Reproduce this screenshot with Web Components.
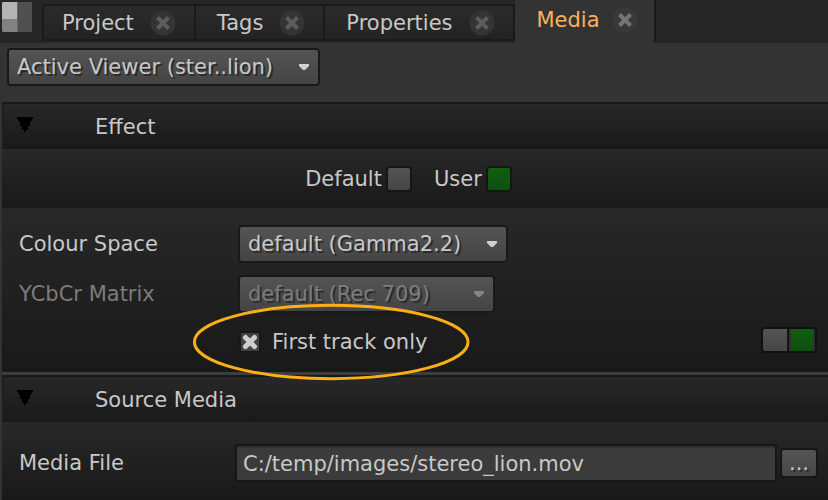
<!DOCTYPE html>
<html lang="en">
<head>
<meta charset="utf-8">
<title>Media</title>
<style>
html, body { margin: 0; min-height: 100%; background: #333; }
body { font: 21px/28px "DejaVu Sans", sans-serif; color: #c8c8c8; }
</style>
</head>
<body>
<media-panel></media-panel>
<script>
const define = (name, html, setup) => customElements.define(name, class extends HTMLElement {
  constructor() {
    super();
    this.attachShadow({ mode: "open" });
  }
  connectedCallback() {
    if (this.shadowRoot.childNodes.length) return;
    const t = document.createElement("template");
    t.innerHTML = "<style>*{box-sizing:border-box} button,input,select{font:inherit;color:inherit;margin:0}</style>" + html;
    this.shadowRoot.append(t.content.cloneNode(true));
    if (setup) setup(this, this.shadowRoot);
  }
});

define("panel-tab", `
<style>
:host { display: flex; align-items: center; gap: 16px; height: 37px; padding: 0 18px 0 21px; background: linear-gradient(#2b2b2b, #232323); border: 2px solid #1a1a1a; border-left-width: 0; box-sizing: border-box; }
:host([first]) { border-left-width: 2px; border-top-left-radius: 3px; padding-left: 18px; }
:host([active]) { height: 43px; gap: 12px; padding: 0 16px 3px 22px; background: #333; border: 0; border-right: 2px solid #1a1a1a; border-radius: 0 0 3px 0; color: #fbb060; text-shadow: 1px 2px #262626; }
button { appearance: none; background: none; border: 0; padding: 0; white-space: nowrap; }
.close { display: flex; }
svg { width: 26px; height: 26px; }
circle { fill: #343434; }
path { stroke: #5c5c5c; stroke-width: 4; }
:host([active]) circle { fill: #393939; }
:host([active]) path { stroke: #757575; }
</style>
<button type="button" role="tab"><slot></slot></button>
<button type="button" class="close" aria-label="Close tab"><svg viewBox="0 0 26 26"><circle cx="13" cy="13" r="12.5"/><path d="M7.5 7.5l11 11M18.500 7.500l-11 11"/></svg></button>
`);

define("tab-strip", `
<style>
:host { display: flex; align-items: flex-end; height: 43px; background: #262626; }
svg { width: 30px; height: 30px; flex: none; align-self: flex-start; margin: 2px 10px 0 2px; }
div { display: flex; align-items: flex-end; }
::slotted(panel-tab) { margin-bottom: 2px; }
::slotted(panel-tab[active]) { margin-bottom: 0; }
</style>
<svg viewBox="0 0 30 30" aria-hidden="true"><path fill="#b5b5b5" d="M0 1L1 0H15V17H0z"/><path fill="#828282" d="M0 17H15V30H1L0 29z"/><path fill="#505050" d="M15 0H29L30 1V29L29 30H15z"/><path d="M15.500 0V30" stroke="#686868"/></svg>
<div role="tablist"><slot></slot></div>
`);

define("drop-down", `
<style>
:host { display: flex; align-items: center; }
label { width: 219px; flex: none; }
label:empty { display: none; }
.box { display: grid; align-items: center; }
.box > * { grid-area: 1 / 1; }
:host([wide]) .box { min-width: 257px; }
select { appearance: none; width: 100%; height: 38px; padding: 0 44px 0 8px; border: 2px solid #191919; border-radius: 4px; background: linear-gradient(#545454, #444); text-shadow: 2px 2px 0 #2b2b2b; opacity: 1; }
svg { width: 10px; height: 6px; justify-self: end; margin-right: 11px; pointer-events: none; fill: #d0d0d0; z-index: 1; }
:host([disabled]) label, :host([disabled]) select { color: #7c7c7c; }
:host([disabled]) svg { fill: #858585; }
</style>
<label for="s"></label>
<div class="box"><select id="s"></select><svg viewBox="0 0 10 6"><path d="M0 0H10V2L6 6H4L0 2z"/></svg></div>
`, (el, root) => {
  const s = root.querySelector("select");
  root.querySelector("label").textContent = el.getAttribute("label") || "";
  if (!el.hasAttribute("label")) s.setAttribute("aria-label", "Viewer");
  s.add(new Option(el.getAttribute("value")));
  s.disabled = el.hasAttribute("disabled");
});

define("fold-section", `
<style>
:host { display: block; margin-left: 2px; }
h2 { display: flex; align-items: center; height: 47px; margin: 0; padding-left: 13px; font: inherit; border-top: 2px solid #191919; border-left: 2px solid #1e1e1e; background: linear-gradient(#282828, #191919); }
button { appearance: none; background: none; border: 0; padding: 0; display: flex; align-items: center; gap: 62px; }
svg { width: 16px; height: 15px; margin-bottom: 4px; }
</style>
<section><h2><button type="button" aria-expanded="true"><svg viewBox="0 0 16 15"><path d="M0 0H16V2H15L14 5H13V9H11V13H9V15H7V13H5V9H3V5H2L1 2H0z"/></svg><slot name="title"></slot></button></h2><slot></slot></section>
`);

define("mode-row", `
<style>
:host { display: flex; justify-content: center; align-items: center; gap: 22px; height: 59px; padding-right: 13px; background: linear-gradient(#282828, #191919); box-sizing: border-box; }
label { display: flex; align-items: center; gap: 4px; }
input { appearance: none; width: 26px; height: 26px; border: 2px solid #151515; border-radius: 4px; background: linear-gradient(#545454, #464646); }
input:checked { background: linear-gradient(#125e12, #0f4f0f); }
</style>
<label>Default<input type="radio" name="mode"></label>
<label>User<input type="radio" name="mode" checked></label>
`);

define("switch-pair", `
<style>
:host { display: flex; border: 2px solid #101010; border-radius: 4px; background: #151515; gap: 2px; overflow: hidden; margin-bottom: 4px; }
input { appearance: none; width: 24px; height: 22px; background: linear-gradient(#545454, #464646); }
input:checked { width: 26px; background: linear-gradient(#125e12, #0f4f0f); border: 0 solid #303030; border-width: 0 2px; }
</style>
<input type="radio" name="level" aria-label="Default"><input type="radio" name="level" aria-label="User" checked>
`);

define("tick-box", `
<style>
:host { display: flex; align-items: center; }
label { position: relative; display: flex; align-items: center; gap: 11px; }
.tick { display: grid; place-items: center; }
.tick > * { grid-area: 1 / 1; }
input { appearance: none; width: 22px; height: 22px; border: 2px solid #171717; background: #424242; }
.x { width: 18px; height: 18px; pointer-events: none; visibility: hidden; }
input:checked + .x { visibility: visible; }
.ring { position: absolute; inset: -23px -42px -23px -46px; width: calc(100% + 88px); height: calc(100% + 46px); pointer-events: none; overflow: visible; }
</style>
<label><span class="tick"><input type="checkbox" checked><svg class="x" viewBox="0 0 18 18"><path d="M4.500 4.500L13.500 13.500M13.500 4.500L4.500 13.500" stroke="#cecece" stroke-width="5" stroke-linecap="round"/></svg></span><slot></slot>
<svg class="ring" aria-hidden="true"><ellipse cx="50%" cy="50%" rx="49.500%" ry="49.500%" fill="none" stroke="#fbaf17" stroke-width="3"/></svg></label>
`);

define("file-field", `
<style>
:host { display: flex; align-items: center; height: 50px; }
label { width: 216px; flex: none; }
input { flex: 1; min-width: 0; height: 38px; padding: 2px 6px 0; border: 2px solid #161616; border-radius: 3px; background: #3b3b3b; box-shadow: inset 0 2px #303030; }
button { appearance: none; width: 38px; height: 30px; margin-left: 3px; padding: 0; line-height: 20px; border: 2px solid #161616; border-radius: 4px; background: linear-gradient(#545454, #464646); text-shadow: 2px 2px #2b2b2b; }
</style>
<label for="f">Media File</label><input id="f" type="text" value="C:/temp/images/stereo_lion.mov"><button type="button" aria-label="Browse">...</button>
`);

define("media-panel", `
<style>
:host { display: flex; flex-direction: column; min-height: 100vh; }
.viewer { padding: 5px 7px 16px; display: flex; }
.rows { padding: 11px 11px 7px 17px; display: grid; grid-template-rows: 50px 50px 46px; background: linear-gradient(#282828, #191919); }
.tick { display: flex; align-items: center; justify-content: space-between; padding-left: 220px; }
.first { border-bottom: 3px solid #3d3d3d; }
.last { flex: 1; }
.file { height: 78px; padding: 16px 10px 0 17px; background: linear-gradient(#282828, #191919); }
</style>
<tab-strip>
  <panel-tab first>Project</panel-tab><panel-tab>Tags</panel-tab><panel-tab>Properties</panel-tab><panel-tab active>Media</panel-tab>
</tab-strip>
<div class="viewer"><drop-down value="Active Viewer (ster..lion)"></drop-down></div>
<fold-section class="first"><span slot="title">Effect</span>
  <mode-row></mode-row>
  <div class="rows">
    <drop-down label="Colour Space" value="default (Gamma2.2)"></drop-down>
    <drop-down label="YCbCr Matrix" value="default (Rec 709)" disabled wide></drop-down>
    <div class="tick"><tick-box>First track only</tick-box><switch-pair></switch-pair></div>
  </div>
</fold-section>
<fold-section class="last"><span slot="title">Source Media</span>
  <div class="file"><file-field></file-field></div>
</fold-section>
`);
</script>
</body>
</html>
